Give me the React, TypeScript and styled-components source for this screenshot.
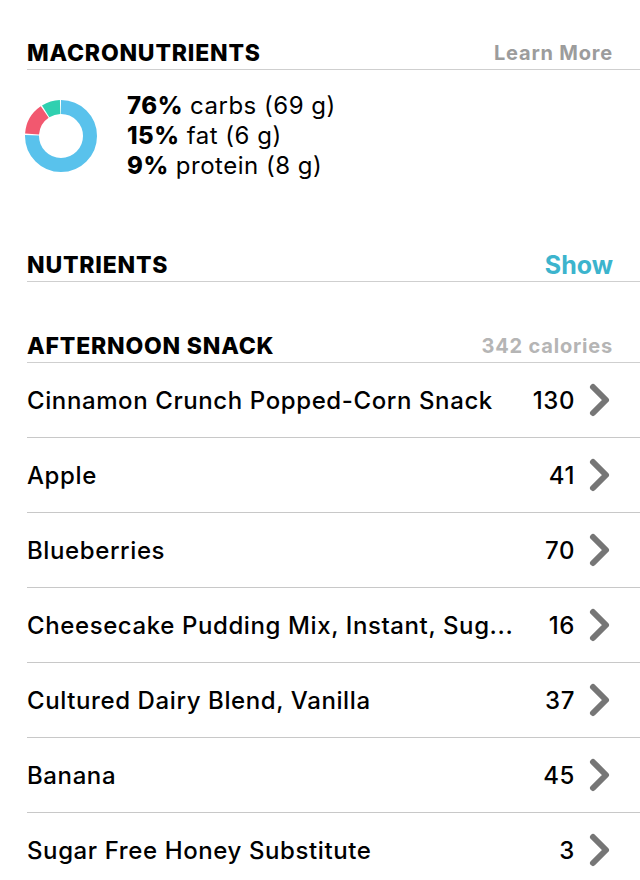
import React from 'react';
import styled, { createGlobalStyle } from 'styled-components';

// ─── Data ─────────────────────────────────────────────────────────────────────

interface Macro {
  pct: number;
  label: string;
  grams: number;
  color: string;
}

const MACROS: Macro[] = [
  { pct: 76, label: 'carbs', grams: 69, color: '#59c2ec' },
  { pct: 15, label: 'fat', grams: 6, color: '#f2586f' },
  { pct: 9, label: 'protein', grams: 8, color: '#2fd0b0' },
];

const FOODS: { name: string; cal: number }[] = [
  { name: 'Cinnamon Crunch Popped-Corn Snack', cal: 130 },
  { name: 'Apple', cal: 41 },
  { name: 'Blueberries', cal: 70 },
  { name: 'Cheesecake Pudding Mix, Instant, Sug...', cal: 16 },
  { name: 'Cultured Dairy Blend, Vanilla', cal: 37 },
  { name: 'Banana', cal: 45 },
  { name: 'Sugar Free Honey Substitute', cal: 3 },
];

// ─── Styled ───────────────────────────────────────────────────────────────────

const GlobalStyle = createGlobalStyle`
  html, body {
    margin: 0;
    padding: 0;
    background: #fff;
  }
  body {
    font-family: Inter, "Liberation Sans", sans-serif;
    color: #000;
    -webkit-font-smoothing: antialiased;
  }
`;

const Page = styled.div`
  width: 640px;
  height: 880px;
  overflow: hidden;
  padding-left: 27px;
  box-sizing: border-box;
`;

const SectionHeader = styled.div<{ top: number }>`
  display: flex;
  align-items: center;
  justify-content: space-between;
  margin-top: ${({ top }) => top}px;
  height: 33px;
  padding-right: 27px;
  border-bottom: 1px solid #cfcfcf;
`;

const Title = styled.span`
  font-size: 23px;
  font-weight: 800;
  letter-spacing: 0.8px;
`;

const Aside = styled.span<{ color: string; size: number; spacing: number }>`
  font-size: ${({ size }) => size}px;
  font-weight: 700;
  letter-spacing: ${({ spacing }) => spacing}px;
  color: ${({ color }) => color};
`;

const MacroBody = styled.div`
  display: flex;
  align-items: center;
  gap: 30px;
  margin-left: -2px;
  padding-top: 21px;
`;

const MacroList = styled.div`
  display: flex;
  flex-direction: column;
  font-size: 24px;
  line-height: 30px;
  letter-spacing: 0.5px;
`;

const Pct = styled.b`
  font-weight: 800;
`;

const Row = styled.div`
  display: flex;
  align-items: center;
  height: 74px;
  padding-right: 28px;
  border-bottom: 1px solid #c8c8c8;
  font-size: 24px;
  font-weight: 500;
  letter-spacing: 0.6px;
`;

const Name = styled.span`
  flex: 1;
  min-width: 0;
  white-space: nowrap;
  overflow: hidden;
  text-overflow: ellipsis;
`;

const Cal = styled.span`
  margin-left: 16px;
`;

const Chevron = styled.svg`
  width: 24px;
  height: 36px;
  margin-left: 13px;
  flex-shrink: 0;
`;

// ─── Parts ────────────────────────────────────────────────────────────────────

const Donut: React.FC<{ data: Macro[] }> = ({ data }) => {
  const r = 29;
  const c = 2 * Math.PI * r;
  const gap = 1.2;
  let offset = 0;
  return (
    <svg width="72" height="72" viewBox="0 0 72 72">
      <g transform="rotate(-90 36 36)">
        {data.map((m) => {
          const len = (m.pct / 100) * c;
          const seg = (
            <circle
              key={m.label}
              cx="36"
              cy="36"
              r={r}
              fill="none"
              stroke={m.color}
              strokeWidth="14"
              strokeDasharray={`${len - gap} ${c - len + gap}`}
              strokeDashoffset={-offset}
            />
          );
          offset += len;
          return seg;
        })}
      </g>
    </svg>
  );
};

// ─── Component ────────────────────────────────────────────────────────────────

const App: React.FC = () => (
  <>
    <GlobalStyle />
    <Page>
      <SectionHeader top={36}>
        <Title>MACRONUTRIENTS</Title>
        <Aside color="#9c9c9c" size={20} spacing={0.8}>Learn More</Aside>
      </SectionHeader>
      <MacroBody>
        <Donut data={MACROS} />
        <MacroList>
          {MACROS.map((m) => (
            <span key={m.label}>
              <Pct>{m.pct}%</Pct> {m.label} ({m.grams} g)
            </span>
          ))}
        </MacroList>
      </MacroBody>

      <SectionHeader top={67}>
        <Title>NUTRIENTS</Title>
        <Aside color="#3cb4cd" size={25} spacing={0}>Show</Aside>
      </SectionHeader>

      <SectionHeader top={47}>
        <Title>AFTERNOON SNACK</Title>
        <Aside color="#b5b5b5" size={20} spacing={0.8}>342 calories</Aside>
      </SectionHeader>

      {FOODS.map((f) => (
        <Row key={f.name}>
          <Name>{f.name}</Name>
          <Cal>{f.cal}</Cal>
          <Chevron viewBox="0 0 24 36">
            <polyline
              points="5,5 18,18 5,31"
              fill="none"
              stroke="#767676"
              strokeWidth="6"
              strokeLinecap="round"
              strokeLinejoin="round"
            />
          </Chevron>
        </Row>
      ))}
    </Page>
  </>
);

export default App;
